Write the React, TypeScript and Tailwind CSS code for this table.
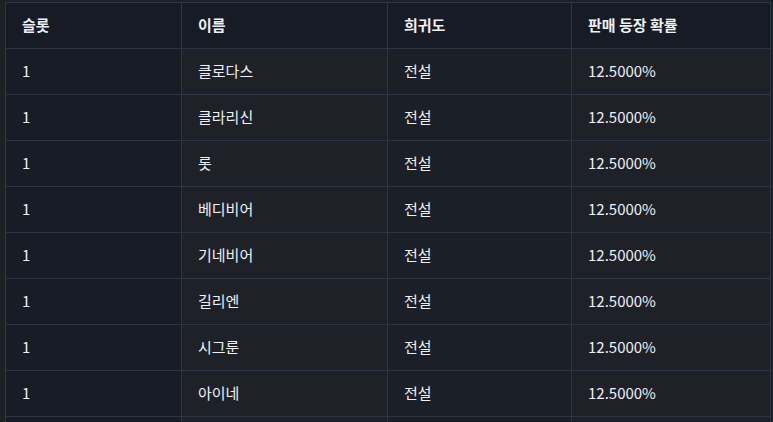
import React from "react";

const rows: [string, string, string, string][] = [
  ["1", "클로다스", "전설", "12.5000%"],
  ["1", "클라리신", "전설", "12.5000%"],
  ["1", "롯", "전설", "12.5000%"],
  ["1", "베디비어", "전설", "12.5000%"],
  ["1", "기네비어", "전설", "12.5000%"],
  ["1", "길리엔", "전설", "12.5000%"],
  ["1", "시그룬", "전설", "12.5000%"],
  ["1", "아이네", "전설", "12.5000%"],
  ["", "", "", ""],
];

const cell = "h-[46px] flex items-center pl-[16px] border-r border-b border-[#2b3747] text-[15px]";
const bodyBg = ["bg-[#171c26]", "bg-[#1e2128]", "bg-[#1b1f27]", "bg-[#1e2128]"];

export default function App() {
  return (
    <div
      className="w-[773px] h-[422px] overflow-hidden bg-[#1d2027] pl-[5px] pt-[2px] text-[#eef0f3]"
      style={{ fontFamily: '"Noto Sans CJK KR", "Noto Sans", sans-serif' }}
    >
      <div className="grid grid-cols-[176px_206px_184px_199px] border-l border-t border-[#2b3747] w-[766px]">
        {["슬롯", "이름", "희귀도", "판매 등장 확률"].map((h) => (
          <div key={h} className={`${cell} bg-[#161b26] font-bold`}>
            {h}
          </div>
        ))}
        {rows.map((r, i) =>
          r.map((c, j) => (
            <div key={`${i}-${j}`} className={`${cell} ${bodyBg[j]}`}>
              {c}
            </div>
          ))
        )}
      </div>
    </div>
  );
}
